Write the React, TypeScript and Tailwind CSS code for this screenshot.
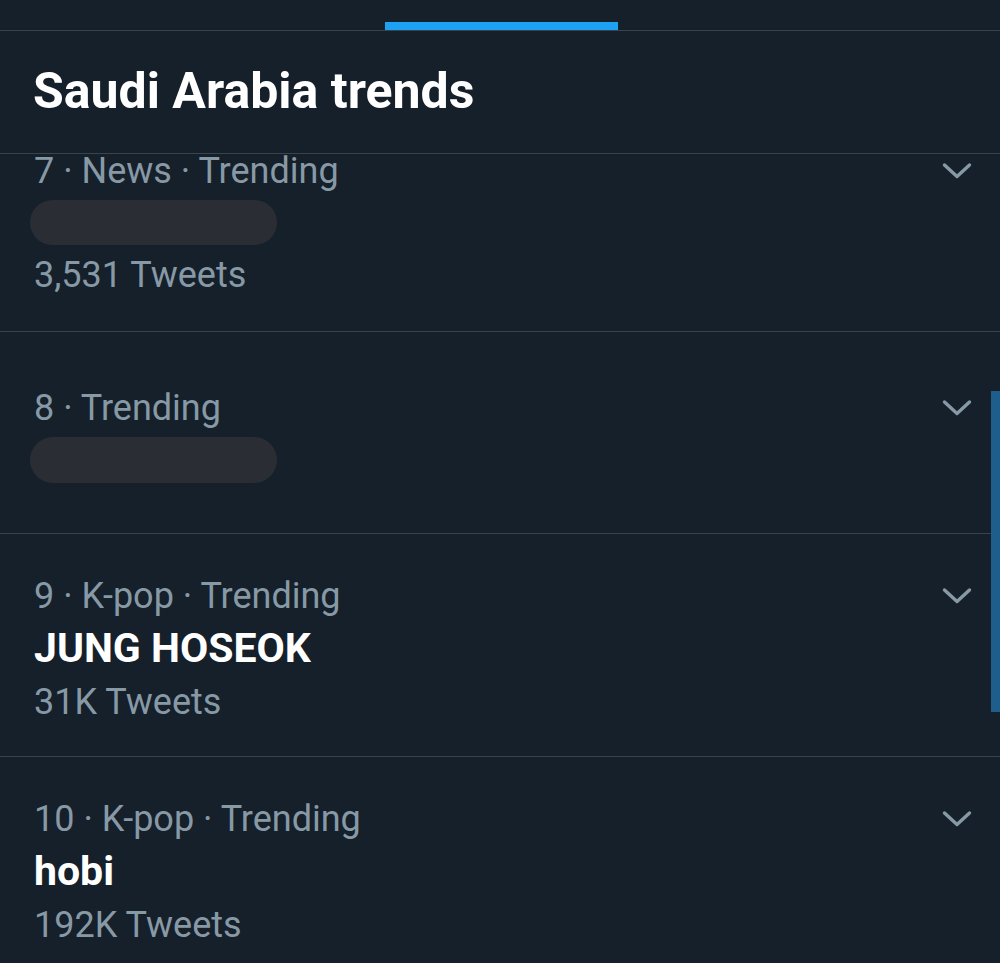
import React from "react";

const Chevron = () => (
  <svg width="30" height="18" viewBox="0 0 30 18" className="shrink-0">
    <path d="M2.5 3 L15 14.5 L27.5 3" fill="none" stroke="#8899a6" strokeWidth="3.4" strokeLinecap="round" strokeLinejoin="round" />
  </svg>
);

const Pill = () => <div className="my-[3px] h-[47px] w-[247px] -ml-[4px] rounded-full bg-[#2a2e34]" />;

type Row = { meta: string; name?: string; tweets?: string; redacted?: boolean; center?: boolean };

const TrendRow = ({ meta, name, tweets, redacted, center }: Row) => (
  <div className={`relative flex border-b border-[#38444d] pl-[34px] pr-[28px] ${center ? "pt-[49px] pb-[47px] h-[202px]" : "pt-[35px] pb-[30px] h-[223px]"}`}>
    <div className="flex flex-1 flex-col">
      <div className="h-[53px] leading-[54px] text-[36px] text-[#8899a6]">{meta}</div>
      {redacted ? (
        <Pill />
      ) : (
        <div className="h-[53px] leading-[53px] text-[41px] font-bold text-white">{name}</div>
      )}
      {tweets && <div className="h-[53px] leading-[54px] text-[36px] text-[#8899a6]">{tweets}</div>}
    </div>
    <div className="pt-[18px]">
      <Chevron />
    </div>
  </div>
);

export default function App() {
  return (
    <div className="relative h-[963px] w-[1000px] overflow-hidden bg-[#15202b]" style={{ fontFamily: "Roboto, 'Noto Sans', sans-serif" }}>
      <div className="relative z-10 bg-[#15202b]">
        <div className="flex h-[31px] justify-center border-b border-[#38444d]">
          <div className="mt-[22px] ml-[3px] h-[8px] w-[233px] bg-[#1da1f2]" />
        </div>
        <div className="flex h-[123px] items-center border-b border-[#38444d] pl-[33px] pb-[2px]">
          <h1 className="text-[50px] font-bold leading-none text-white">Saudi Arabia trends</h1>
        </div>
      </div>
      <div className="-mt-[45px]">
        <TrendRow meta="7 · News · Trending" redacted tweets="3,531 Tweets" />
        <TrendRow meta="8 · Trending" redacted center />
        <TrendRow meta="9 · K-pop · Trending" name="JUNG HOSEOK" tweets="31K Tweets" />
        <TrendRow meta="10 · K-pop · Trending" name="hobi" tweets="192K Tweets" />
      </div>
      <div className="absolute right-0 top-[391px] h-[321px] w-[9px] bg-[#1d5e8c]" />
    </div>
  );
}
